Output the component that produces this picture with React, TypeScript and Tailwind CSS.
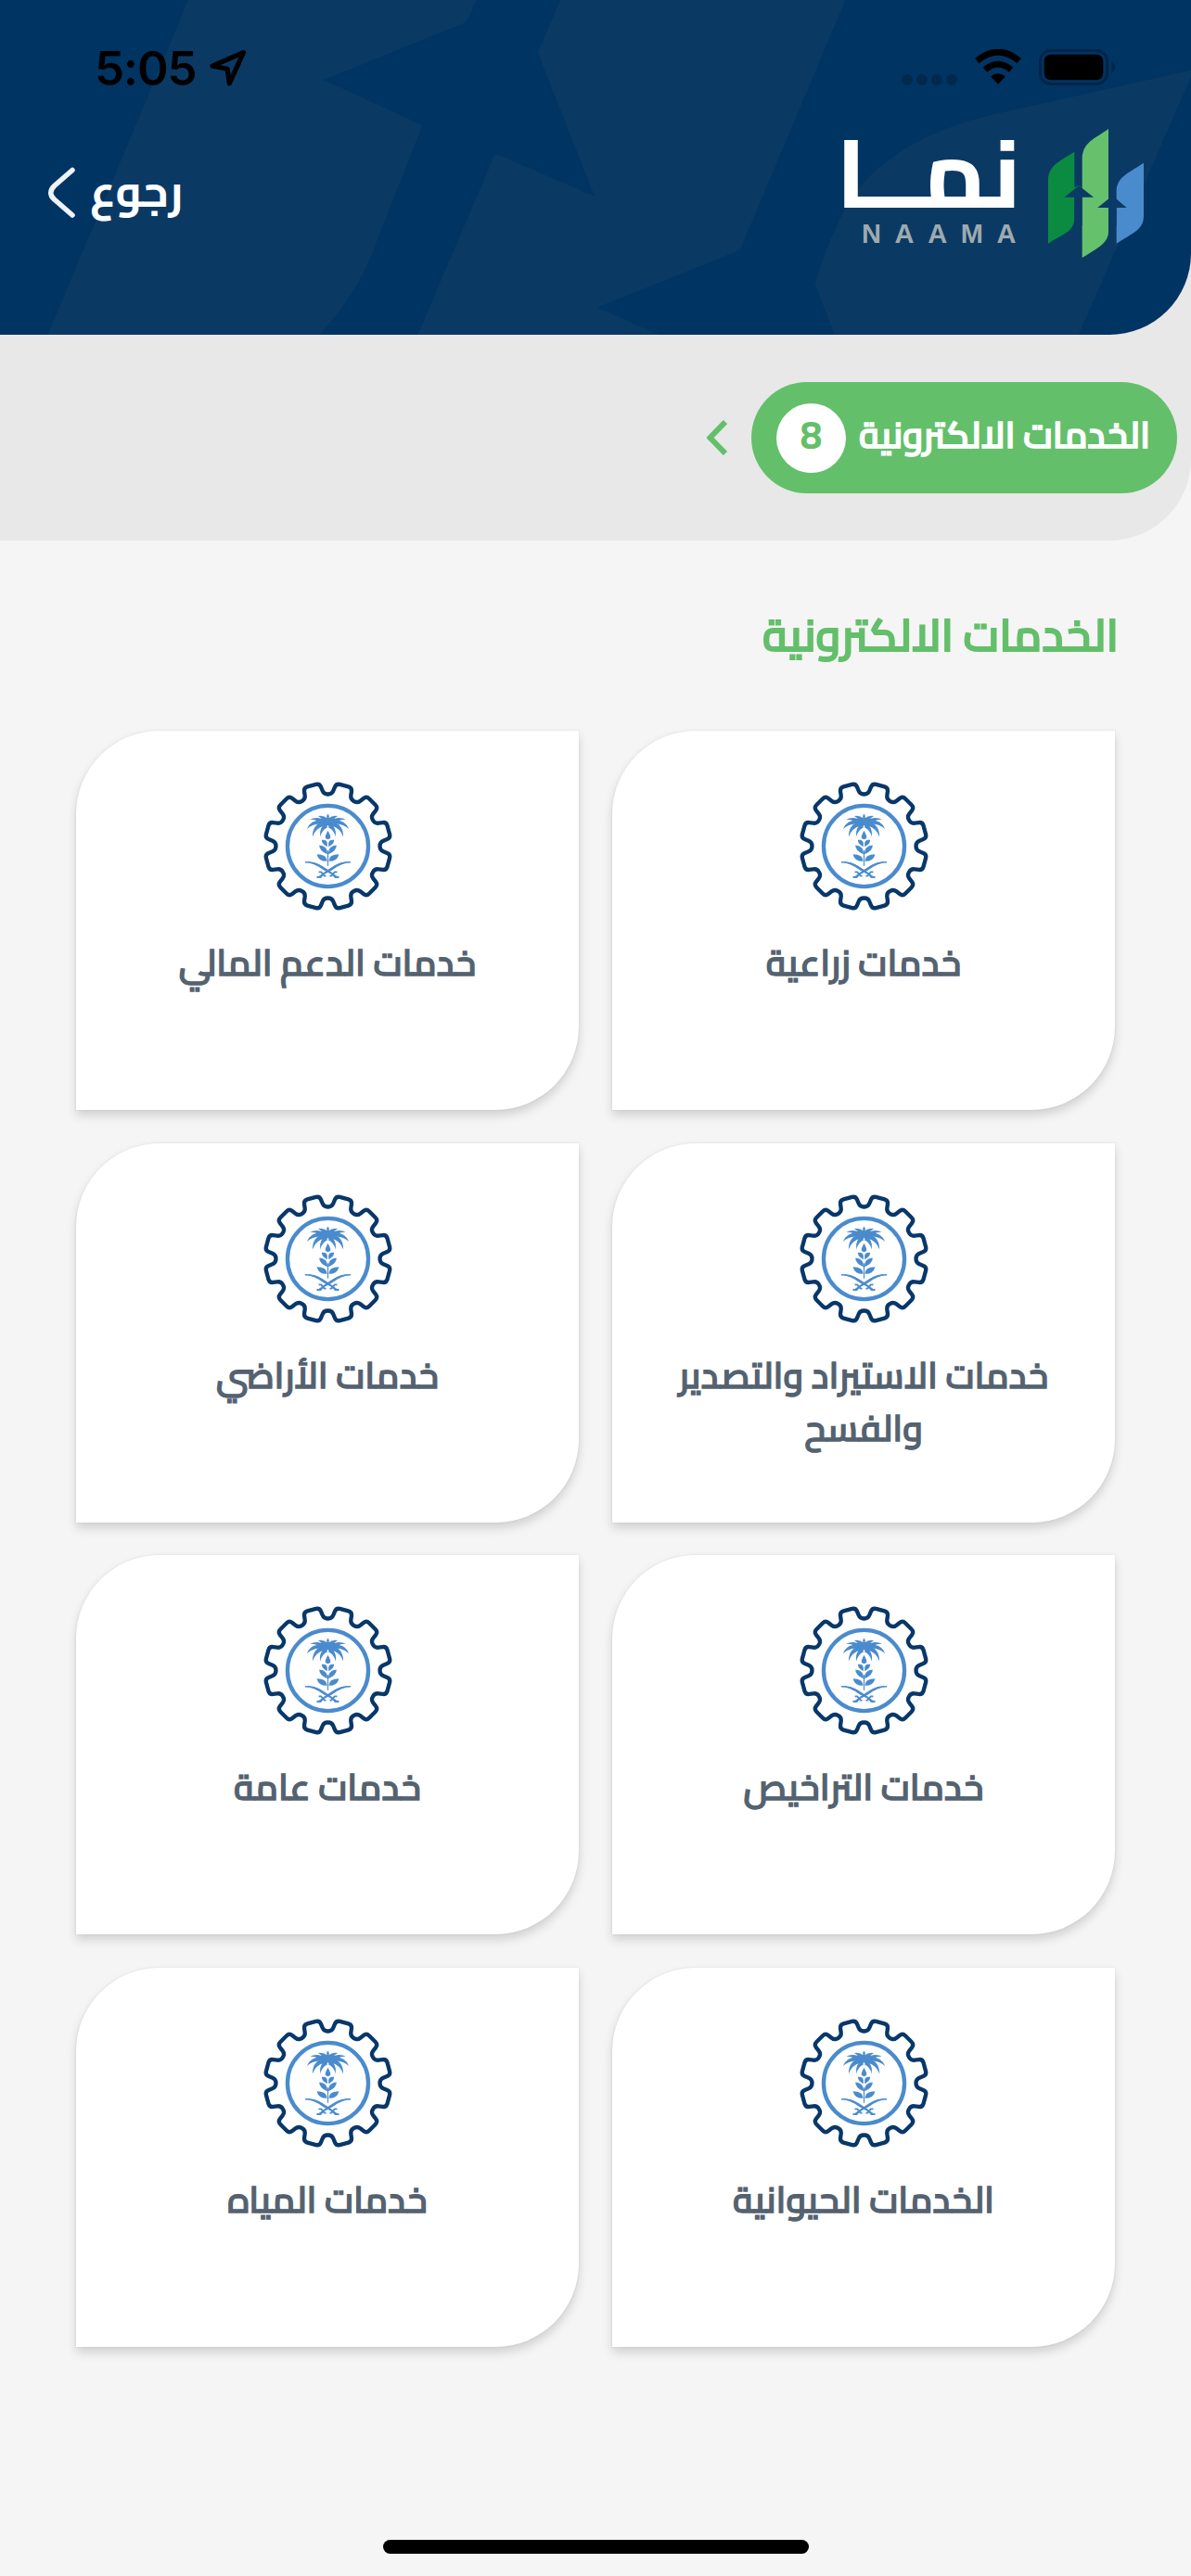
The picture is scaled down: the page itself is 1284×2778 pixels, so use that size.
const SERVICES = [
  'خدمات زراعية',
  'خدمات الدعم المالي',
  'خدمات الاستيراد والتصدير والفسح',
  'خدمات الأراضي',
  'خدمات التراخيص',
  'خدمات عامة',
  'الخدمات الحيوانية',
  'خدمات المياه',
];

type Point = [number, number];

// Outline of a twelve-tooth gear centred on the origin, with softened corners.
function gearPath(): string {
  const points: Point[] = [];
  const polar = (r: number, deg: number): Point => {
    const a = (deg * Math.PI) / 180;
    return [r * Math.sin(a), -r * Math.cos(a)];
  };
  for (let i = 0; i < 12; i++) {
    const t = i * 30;
    points.push(polar(205, t - 7.6), polar(169, t - 4.4), polar(169, t + 4.4), polar(205, t + 7.6));
  }
  const toward = (from: Point, to: Point, d: number): Point => {
    const len = Math.hypot(to[0] - from[0], to[1] - from[1]);
    return [from[0] + ((to[0] - from[0]) * d) / len, from[1] + ((to[1] - from[1]) * d) / len];
  };
  const f = (p: Point) => `${p[0].toFixed(1)} ${p[1].toFixed(1)}`;
  return (
    points
      .map((p, i) => {
        const prev = points[(i + points.length - 1) % points.length];
        const next = points[(i + 1) % points.length];
        return `${i === 0 ? 'M' : 'L'}${f(toward(p, prev, 12))}Q${f(p)} ${f(toward(p, next, 12))}`;
      })
      .join('') + 'Z'
  );
}

const GEAR = gearPath();

function HalfEmblem() {
  return (
    <>
      {/* palm fronds */}
      <path d="M-2 -105L4 -98L3 -91Q14 -101 32 -98Q24 -94 20 -89Q40 -96 58 -87Q40 -86 30 -80Q22 -60 8 -60L-2 -70Z" />
      <path d="M18 -84Q56 -86 68 -56Q50 -72 20 -72Z" />
      <path d="M12 -78Q50 -74 50 -30Q40 -58 12 -66Z" />
      <path d="M4 -72Q30 -64 25 -30Q20 -52 2 -60Z" />
      {/* ear of wheat */}
      <path d="M2 -8Q2 -22 20 -20Q20 -6 2 2Z" />
      <path d="M2 20Q2 0 28 -3Q28 16 2 26Z" />
      <path d="M3 47Q4 26 36 26Q30 50 3 49Z" />
      {/* crossed swords */}
      <path
        d="M74 52Q44 48 12 70Q-14 86 -34 103L-26 98Q-4 86 14 76Q46 52 74 52Z"
        stroke="#4a8bcd"
        strokeWidth="3"
      />
      <path
        d="M-36 100L-24 101L-18 94M-30 84L-22 84L-12 96L-6 97"
        fill="none"
        stroke="#4a8bcd"
        strokeWidth="5.5"
        strokeLinejoin="round"
      />
    </>
  );
}

function ServiceEmblem() {
  return (
    <svg viewBox="-209 -209 418 418" className="size-[139px] shrink-0">
      <path d={GEAR} fill="none" stroke="#08376a" strokeWidth="13" strokeLinejoin="round" />
      <circle r="131" fill="none" stroke="#4a8bcd" strokeWidth="13" />
      <g fill="#4a8bcd">
        <HalfEmblem />
        <g transform="scale(-1 1)">
          <HalfEmblem />
        </g>
        <path d="M0 -50Q10 -32 8 -27Q0 -16 -8 -27Q-10 -32 0 -50Z" />
        <rect x="-1.8" y="14" width="3.6" height="50" />
      </g>
    </svg>
  );
}

function LogoMark() {
  return (
    <svg viewBox="750 87 309 417" className="h-[139px] w-[103px] shrink-0">
      <path d="M750 458V252C750 205 790 190 835 161V277L850 270L897 308H835V375C835 420 800 425 750 458Z" fill="#0b8b42" />
      <path d="M860 504V186C860 130 900 120 945 87V420C945 458 905 475 860 504Z" fill="#66c16d" />
      <path d="M971 458V290C971 240 1015 228 1059 197V370C1059 415 1020 425 971 458Z" fill="#4a8bcd" />
      <path d="M850 271L897 308H802Z" fill="#0a3a65" />
      <path d="M958 303L1004 342H910Z" fill="#0a3a65" />
      <path d="M835 290H860V400H835ZM945 330H971V400H945Z" fill="#0a3a65" />
    </svg>
  );
}

function HeaderPattern() {
  return (
    <svg
      viewBox="0 0 1568 942"
      preserveAspectRatio="none"
      className="absolute inset-0 h-full w-full"
      fill="#0a3a64"
    >
      <path d="M248 0H627L614 62L426 225L556 352L494 690Q470 830 420 942H63Z" />
      <path d="M738 0H1113L974 704L786 865L868 942H550L652 432L783 553L708 148Z" />
      <path d="M1568 198L1330 312Q1180 375 1120 560Q1090 670 1073 800L1099 942H1420L1568 215Z" />
    </svg>
  );
}

function StatusBar() {
  return (
    <div className="relative flex h-[118px] items-start justify-between pr-[82px] pl-[102px]">
      <div className="flex items-start gap-[15px] pt-[48px]">
        <span className="font-['Inter'] text-[51px] leading-[51px] font-semibold tracking-[-1.2px] text-black">
          5:05
        </span>
        <svg viewBox="0 0 40 41" className="mt-[5px] h-[41px] w-[40px]" fill="none">
          <path
            d="M36.5 3.5L3 18.2L19 21.2L21.3 36.8Z"
            stroke="#000"
            strokeWidth="5.2"
            strokeLinejoin="round"
          />
        </svg>
      </div>
      <div className="flex items-start pt-[53px]">
        <div className="mt-[27px] mr-[19px] flex gap-1 opacity-20">
          {[0, 1, 2, 3].map((i) => (
            <span key={i} className="size-3 rounded-full bg-black" />
          ))}
        </div>
        <svg viewBox="0 0 150 114" className="mr-[19px] h-[38px] w-[50px]">
          <path d="M75 113L53 91Q51 88 54 86Q75 71 96 86Q99 88 97 91Z" fill="#000" />
          <path d="M33 67Q75 31 117 67" fill="none" stroke="#000" strokeWidth="20" />
          <path d="M7 38Q75 -19 143 38" fill="none" stroke="#000" strokeWidth="21" />
        </svg>
        <svg viewBox="0 0 82 40" className="h-[40px] w-[82px]">
          <rect x="1.5" y="1.5" width="72" height="36" rx="11" fill="none" stroke="#00234a" strokeWidth="3" />
          <rect x="5.7" y="5.7" width="63.6" height="27.6" rx="7" fill="#000" />
          <path d="M78.5 13Q82 16 82 19.5Q82 23 78.5 26Z" fill="#00234a" />
        </svg>
      </div>
    </div>
  );
}

function Header() {
  return (
    <header className="relative h-[361px] overflow-hidden rounded-br-[88px] bg-[#003463]">
      <HeaderPattern />
      <StatusBar />
      <div className="relative flex items-start justify-between pr-[51px] pl-[51px]">
        <button className="flex items-center gap-[16px] pt-[62px]">
          <svg viewBox="0 0 30 56" className="h-[56px] w-[30px]" fill="none">
            <path
              d="M27 3.5L7.500 20.500Q0 28 7.500 35L27 52"
              stroke="#eef3f8"
              strokeWidth="5.5"
              strokeLinecap="round"
            />
          </svg>
          <span dir="rtl" className="-mt-[7px] text-[48px] leading-[60px] font-bold text-white">
            رجوع
          </span>
        </button>
        <div className="flex items-start gap-[34px] pt-[21px]">
          <div className="flex h-[139px] w-[190px] flex-col items-end">
            <span
              dir="rtl"
              className="origin-right translate-x-[5px] scale-x-[1.055] text-[103px] leading-[96px] font-bold whitespace-nowrap text-white"
            >
              نمــا
            </span>
            <span className="-mr-[14px] font-['Liberation_Sans'] text-[29px] leading-[34px] font-bold tracking-[14.6px] text-[#9eaaaf]">
              NAAMA
            </span>
          </div>
          <LogoMark />
        </div>
      </div>
    </header>
  );
}

function CategoryBar() {
  return (
    <nav className="flex items-center gap-[26px] pt-[51px] pr-[15px]">
      <div className="flex h-[120px] w-[459px] items-center justify-between rounded-full bg-[#63bf6a] pr-[29px] pl-[27px]">
        <span className="pb-[6px] text-[39.4px] leading-[60px] font-semibold whitespace-nowrap text-white [-webkit-text-stroke:1.6px_#fff]">
          الخدمات الالكترونية
        </span>
        <span className="flex size-[75px] items-center justify-center rounded-full bg-white pb-[6px] text-[42px] leading-[60px] font-bold text-[#63bf6a]">
          8
        </span>
      </div>
      <svg viewBox="0 0 22 38" className="h-[38px] w-[22px]" fill="none">
        <path d="M20 2L3.5 19L20 36" stroke="#63bf6a" strokeWidth="6" />
      </svg>
    </nav>
  );
}

function ServiceCard({ title }: { title: string }) {
  return (
    <article className="flex h-[409px] flex-col items-center rounded-tl-[90px] rounded-br-[90px] bg-white px-10 pt-[55px] text-center shadow-[0_0_2px_1px_rgba(0,0,0,0.04),0_6px_11px_rgba(0,0,0,0.15)]">
      <ServiceEmblem />
      <h2 className="mt-[27px] text-[38.8px] leading-[57.3px] font-semibold text-[#546270] [-webkit-text-stroke:1.3px_#546270]">
        {title}
      </h2>
    </article>
  );
}

export default function App() {
  return (
    <div className="flex h-[2778px] w-[1284px] flex-col overflow-hidden bg-[#f5f5f5] font-['Cairo','Noto_Sans_Arabic','DejaVu_Sans',sans-serif]">
      <div className="h-[583px] shrink-0 rounded-br-[88px] bg-[#e8e8e8]">
        <Header />
        <div dir="rtl">
          <CategoryBar />
        </div>
      </div>
      <main dir="rtl" className="flex-1 pr-[82px] pl-[82px]">
        <h1 className="-mr-1 mt-[66px] h-[139px] text-[48.2px] leading-[72px] font-semibold text-[#63bf6a] [-webkit-text-stroke:1.8px_#63bf6a]">
          الخدمات الالكترونية
        </h1>
        <div className="grid grid-cols-2 gap-x-[36px] gap-y-[35.5px]">
          {SERVICES.map((title) => (
            <ServiceCard key={title} title={title} />
          ))}
        </div>
      </main>
      <div className="mx-auto mb-[24px] h-[15px] w-[459px] rounded-full bg-black" />
    </div>
  );
}
